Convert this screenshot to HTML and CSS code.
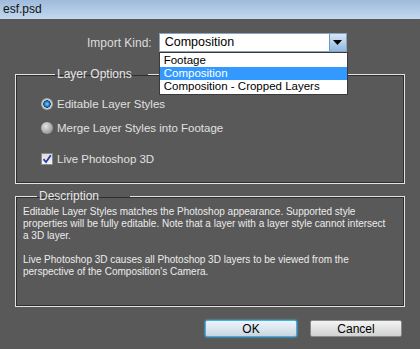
FILE: index.html
```html
<!DOCTYPE html>
<html lang="en">
<head>
    <meta charset="UTF-8">
    <title>esf.psd</title>
    <link rel="stylesheet" href="styles.css">
</head>
<body>

    <div class="titlebar">esf.psd</div>

    <div class="dialog">
        <div class="import-row">
            <span class="import-label">Import Kind:</span>
            <div class="select">
                <span class="select-value">Composition</span>
                <span class="select-btn">
                    <svg width="9" height="5" viewBox="0 0 9 5"><polygon points="0,0 9,0 4.5,5" fill="#000"/></svg>
                </span>
                <ul class="select-list">
                    <li>Footage</li>
                    <li class="active">Composition</li>
                    <li>Composition - Cropped Layers</li>
                </ul>
            </div>
        </div>

        <fieldset class="group options">
            <legend>Layer Options</legend>
            <div class="opt radio-row">
                <span class="radio checked"></span>
                <span>Editable Layer Styles</span>
            </div>
            <div class="opt radio-row">
                <span class="radio"></span>
                <span>Merge Layer Styles into Footage</span>
            </div>
            <div class="opt check-row">
                <span class="check">
                    <svg width="10" height="10" viewBox="0 0 10 10"><path d="M1.5 5.2 L4 8 L8.8 1.2" fill="none" stroke="#2a3fa8" stroke-width="1.8"/></svg>
                </span>
                <span>Live Photoshop 3D</span>
            </div>
        </fieldset>

        <fieldset class="group description">
            <legend>Description</legend>
            <p class="desc">Editable Layer Styles matches the Photoshop appearance. Supported style<br>
            properties will be fully editable. Note that a layer with a layer style cannot intersect<br>
            a 3D layer.</p>
            <p class="desc">Live Photoshop 3D causes all Photoshop 3D layers to be viewed from the<br>
            perspective of the Composition's Camera.</p>
        </fieldset>

        <div class="buttons">
            <button class="btn focused">OK</button>
            <button class="btn">Cancel</button>
        </div>
    </div>

</body>
</html>
```

FILE: styles.css
```css
body {
    margin: 0;
    width: 420px;
    height: 349px;
    background: #595959;
    font-family: "Liberation Sans", Arial, sans-serif;
    color: #e6e6e6;
    overflow: hidden;
}
.titlebar {
    height: 19px;
    line-height: 18px;
    padding-left: 3px;
    font-size: 12px;
    color: #111;
    background: linear-gradient(to bottom, #9fbbdb, #c2d8ef);
}
.dialog {
    padding: 14px 15px 0 15px;
}
.import-row {
    display: flex;
    align-items: center;
    height: 19px;
    padding-left: 72px;
    gap: 7px;
    font-size: 12px;
}
.import-label {
    color: #dcdcdc;
}
.select {
    position: relative;
    display: flex;
    width: 188px;
    height: 19px;
    box-sizing: border-box;
    background: #fff;
    border: 1px solid #8aa4bf;
    color: #000;
    font-size: 12.5px;
}
.select-value {
    flex: 1;
    line-height: 17px;
    padding-left: 5px;
}
.select-btn {
    width: 16px;
    display: flex;
    align-items: center;
    justify-content: center;
    background: linear-gradient(to bottom, #d6e8f8, #8fb8e0);
    border-left: 1px solid #6f97c2;
}
.select-list {
    position: absolute;
    top: 18px;
    left: -1px;
    width: 189px;
    margin: 0;
    padding: 1px 0;
    list-style: none;
    background: #fff;
    border: 1px solid #3a3a3a;
    box-sizing: border-box;
    font-size: 11.5px;
    z-index: 2;
}
.select-list li {
    height: 13px;
    line-height: 13px;
    padding-left: 4px;
}
.select-list li.active {
    background: #3399ff;
    color: #fff;
}
.group {
    margin: 15px 0 0 0;
    padding: 0;
    border: 1px solid #e2e2e2;
    box-shadow: inset 0 0 0 1px #2e2e2e;
}
.group legend {
    width: 93px;
    box-sizing: border-box;
    margin-left: 14px;
    padding: 0 0 0 2px;
    font-size: 12px;
    line-height: 14px;
    color: #e6e6e6;
}
.options {
    padding: 15px 0 16px 25px;
}
.opt {
    display: flex;
    align-items: center;
    height: 16px;
    gap: 4px;
    font-size: 11.5px;
    color: #e0e0e0;
}
.radio-row + .radio-row {
    margin-top: 8px;
}
.check-row {
    margin-top: 15px;
}
.radio {
    width: 12px;
    height: 12px;
    border-radius: 50%;
    background: radial-gradient(circle at 40% 35%, #e4e4e4, #9a9a9a 70%, #7a7a7a);
}
.radio.checked {
    background: radial-gradient(circle, #7fd0ff 0, #1a78c0 2.5px, #0d3f6a 3.5px, #dcdcdc 4px, #9a9a9a 6px);
}
.check {
    width: 12px;
    height: 12px;
    box-sizing: border-box;
    border: 1px solid #8a8a8a;
    background: linear-gradient(to bottom, #dcdcdc, #f4f4f4);
    display: flex;
    align-items: center;
    justify-content: center;
}
.description {
    margin-top: 5px;
    height: 118px;
    padding: 3px 8px 0 7px;
    box-sizing: border-box;
}
.desc {
    margin: 0 0 12px 0;
    font-size: 10px;
    line-height: 12px;
    color: #ececec;
}
.buttons {
    display: flex;
    justify-content: flex-end;
    gap: 13px;
    margin-top: 13px;
    padding-right: 3px;
}
.btn {
    width: 92px;
    height: 17px;
    padding: 0;
    font-family: "Liberation Sans", Arial, sans-serif;
    font-size: 12px;
    color: #000;
    border: 1px solid #8a8a8a;
    border-radius: 2px;
    background: linear-gradient(to bottom, #f4f4f4, #e2e2e2 50%, #d2d2d2);
}
.btn.focused {
    border-color: #3cb4e8;
    box-shadow: 0 0 2px #5fd0ff;
    background: linear-gradient(to bottom, #eef5fb, #dbe6ef 50%, #c9d6e1);
}
```
